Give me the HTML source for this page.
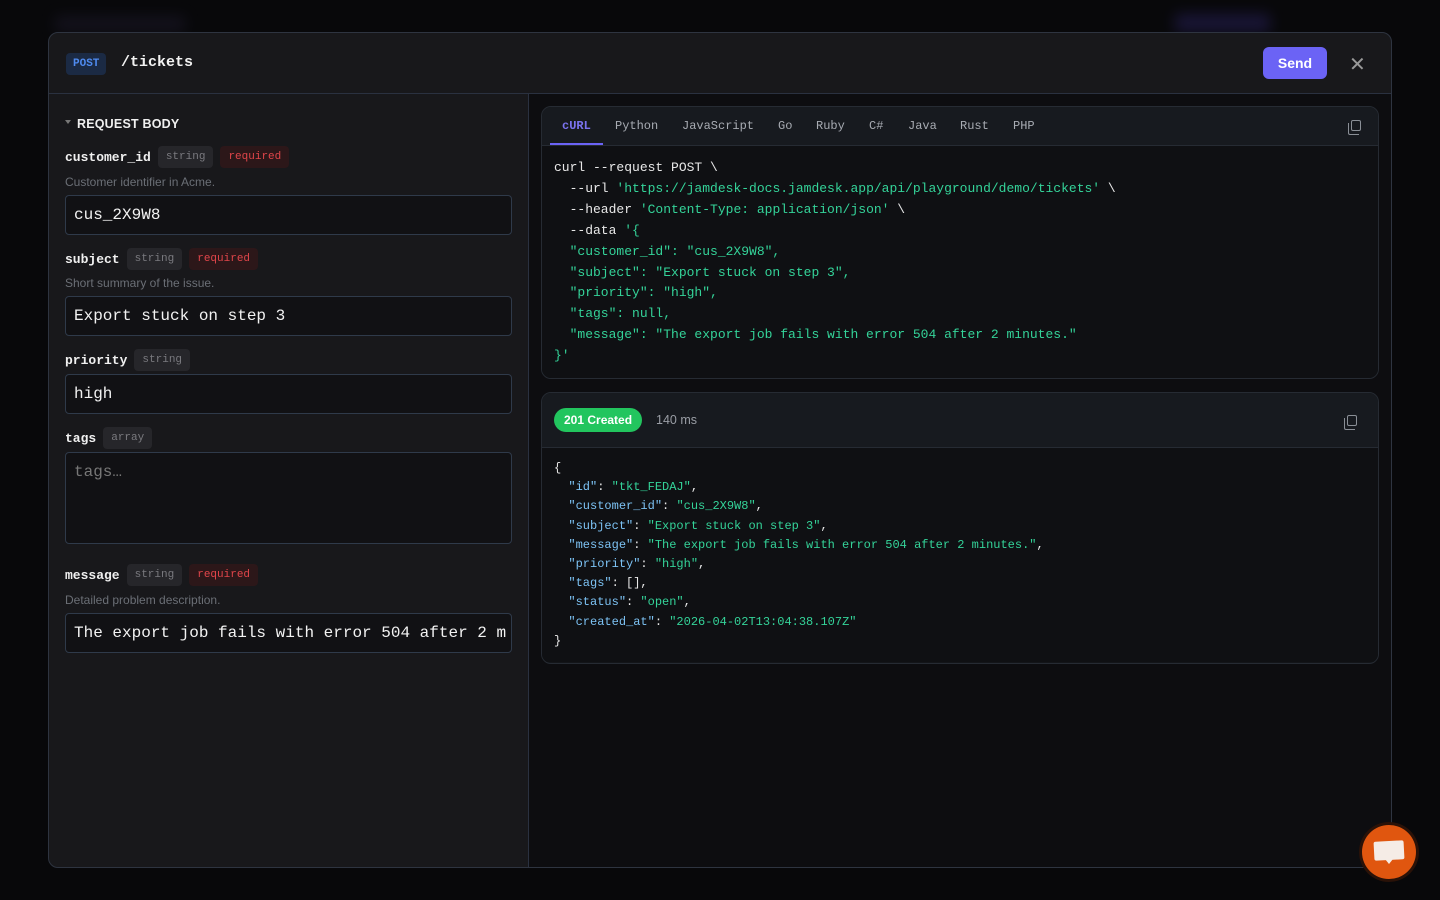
<!DOCTYPE html>
<html><head><meta charset="utf-8"><style>
*{box-sizing:border-box;margin:0;padding:0}
body{width:1440px;height:900px;background:#08080a;overflow:hidden;position:relative;font-family:"Liberation Sans",sans-serif;color:#e5e5e5}
.modal{position:absolute;left:48px;top:32px;width:1344px;height:836px;background:#18181b;border:1px solid #2e3440;border-radius:10px;overflow:hidden}
.hdr{height:61px;border-bottom:1px solid #2a3140;position:relative}
.post{position:absolute;left:17px;top:20px;background:#1b2a44;color:#4f8bf0;font:bold 11px "Liberation Mono",monospace;padding:5px 7px;border-radius:4px}
.path{position:absolute;left:72px;top:21px;font:bold 15px "Liberation Mono",monospace;color:#f2f2f2}
.send{position:absolute;left:1214px;top:14px;width:64px;height:32px;background:#6b63f5;border-radius:6px;color:#fff;font:bold 14px "Liberation Sans",sans-serif;text-align:center;line-height:32px}
.x{position:absolute;left:1300px;top:21px;color:#999;font-size:20px;line-height:22px}
.left{position:absolute;left:0;top:61px;width:480px;bottom:0;border-right:1px solid #2a3140;padding:0 16px}
.right{position:absolute;left:480px;top:61px;right:0;bottom:0;background:#0d0d10}
.sec{position:absolute;left:16px;top:23px;font:bold 12.5px "Liberation Sans",sans-serif;color:#f0f0f0;letter-spacing:.2px}
.sec:before{content:"";display:inline-block;border:3px solid transparent;border-top:4px solid #777;margin-right:6px;vertical-align:1px}
.lab{position:absolute;left:16px;font:bold 13px "Liberation Mono",monospace;color:#f0f0f0;display:flex;align-items:center;gap:7px;height:22px}
.b{font:11px "Liberation Mono",monospace;padding:0 8px;line-height:22px;border-radius:4px;font-weight:normal}
.bs{background:#26262a;color:#7a7a7f}
.br{background:#2c1719;color:#e0454a}
.desc{position:absolute;left:16px;font-size:12px;color:#6b6f76}
.inp{position:absolute;left:16px;width:447px;height:40px;border:1px solid #2f3a4a;border-radius:4px;background:#111114;font:16px "Liberation Mono",monospace;color:#f2f2f2;padding:0 8px;line-height:38px;white-space:nowrap;overflow:hidden}
.card{position:absolute;left:12px;width:838px;background:#131519;border:1px solid #262b33;border-radius:10px;overflow:hidden}
.tabs{height:39px;background:#171a1f;border-bottom:1px solid #262b33;position:relative;font:12px "Liberation Mono",monospace;color:#a8acb3}
.tabs span{position:absolute;top:12px}
.code{font:13px "Liberation Mono",monospace;line-height:20.9px;padding:12px 12px;white-space:pre;color:#e8e8e8;background:#0f1013}
.g{color:#34d399}
.k{color:#7dc3f5}
.copy{position:absolute;width:10px;height:11px;border:1.3px solid #8a8f96;border-radius:2px}
.copy:before{content:"";position:absolute;left:-4px;top:2px;width:10px;height:11px;border-left:1.3px solid #8a8f96;border-bottom:1.3px solid #8a8f96;border-radius:0 0 0 2px}
</style></head><body>
<div style="position:absolute;left:1175px;top:14px;width:95px;height:18px;background:#3a2f8a;filter:blur(7px);opacity:.35"></div>
<div style="position:absolute;left:55px;top:16px;width:130px;height:16px;background:#2a2540;filter:blur(7px);opacity:.35"></div>
<div class="modal">
 <div class="hdr"><span class="post">POST</span><span class="path">/tickets</span><div class="send">Send</div><div class="x">✕</div></div>
 <div class="left">
  <div class="sec">REQUEST BODY</div>
  <div class="lab" style="top:52px">customer_id<span class="b bs">string</span><span class="b br">required</span></div>
  <div class="desc" style="top:81px">Customer identifier in Acme.</div>
  <div class="inp" style="top:101px">cus_2X9W8</div>
  <div class="lab" style="top:154px">subject<span class="b bs">string</span><span class="b br">required</span></div>
  <div class="desc" style="top:182px">Short summary of the issue.</div>
  <div class="inp" style="top:202px">Export stuck on step 3</div>
  <div class="lab" style="top:255px">priority<span class="b bs">string</span></div>
  <div class="inp" style="top:280px">high</div>
  <div class="lab" style="top:333px">tags<span class="b bs">array</span></div>
  <div class="inp" style="top:358px;height:92px;color:#777">tags…</div>
  <div class="lab" style="top:470px">message<span class="b bs">string</span><span class="b br">required</span></div>
  <div class="desc" style="top:499px">Detailed problem description.</div>
  <div class="inp" style="top:519px">The export job fails with error 504 after 2 m</div>
 </div>
 <div class="right">
  <div class="card" style="top:12px;height:273px">
   <div class="tabs"><span style="left:20px;color:#7b73f0;font-weight:bold">cURL</span><div style="position:absolute;left:8px;top:36px;width:53px;height:2px;background:#6b63f5"></div>
   <span style="left:73px">Python</span><span style="left:140px">JavaScript</span><span style="left:236px">Go</span><span style="left:274px">Ruby</span><span style="left:327px">C#</span><span style="left:366px">Java</span><span style="left:418px">Rust</span><span style="left:471px">PHP</span>
   <div class="copy" style="left:809px;top:13px"></div></div>
<div class="code">curl --request POST \
  --url <span class="g">'https://jamdesk-docs.jamdesk.app/api/playground/demo/tickets'</span> \
  --header <span class="g">'Content-Type: application/json'</span> \
  --data <span class="g">'{
  "customer_id": "cus_2X9W8",
  "subject": "Export stuck on step 3",
  "priority": "high",
  "tags": null,
  "message": "The export job fails with error 504 after 2 minutes."
}'</span></div>
  </div>
  <div class="card" style="top:298px;height:272px">
   <div style="height:55px;background:#171a1f;border-bottom:1px solid #262b33;position:relative">
    <span style="position:absolute;left:12px;top:15px;background:#22c55e;color:#fff;font:bold 12px 'Liberation Sans',sans-serif;padding:5px 10px;border-radius:12px">201 Created</span>
    <span style="position:absolute;left:114px;top:20px;font-size:12.5px;color:#9a9ea5">140 ms</span>
    <div class="copy" style="left:805px;top:22px"></div>
   </div>
<div class="code" style="font-size:12px;line-height:19.2px;padding:11px 12px">{
  <span class="k">"id"</span>: <span class="g">"tkt_FEDAJ"</span>,
  <span class="k">"customer_id"</span>: <span class="g">"cus_2X9W8"</span>,
  <span class="k">"subject"</span>: <span class="g">"Export stuck on step 3"</span>,
  <span class="k">"message"</span>: <span class="g">"The export job fails with error 504 after 2 minutes."</span>,
  <span class="k">"priority"</span>: <span class="g">"high"</span>,
  <span class="k">"tags"</span>: [],
  <span class="k">"status"</span>: <span class="g">"open"</span>,
  <span class="k">"created_at"</span>: <span class="g">"2026-04-02T13:04:38.107Z"</span>
}</div>
  </div>
 </div>
</div>
<div style="position:absolute;left:1359px;top:822px;width:60px;height:60px;border-radius:50%;background:#2a1208"></div>
<div style="position:absolute;left:1362px;top:825px;width:54px;height:54px;border-radius:50%;background:#e0560f">
 <div style="position:absolute;left:12px;top:16px;width:30px;height:19px;background:#f5ece6;border-radius:2px;transform:rotate(-3deg)"></div>
 <div style="position:absolute;left:23px;top:34px;border:4px solid transparent;border-top:5px solid #f5ece6"></div>
</div>
</body></html>
